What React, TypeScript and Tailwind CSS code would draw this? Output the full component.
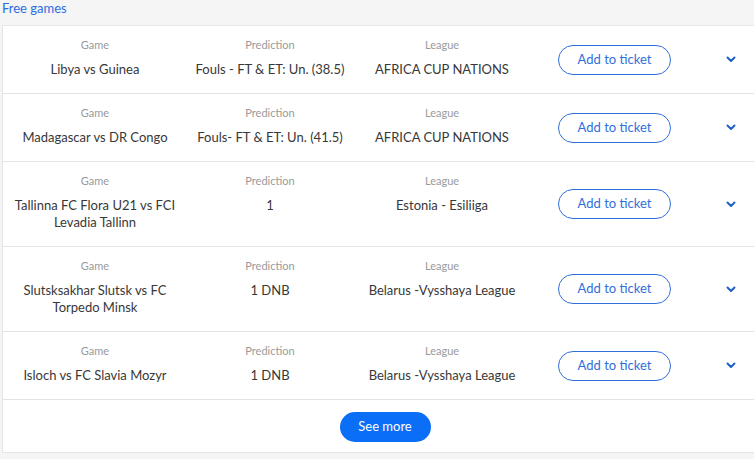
import React from "react";

type Tip = { game: string; prediction: string; league: string };

const tips: Tip[] = [
  { game: "Libya vs Guinea", prediction: "Fouls - FT & ET: Un. (38.5)", league: "AFRICA CUP NATIONS" },
  { game: "Madagascar vs DR Congo", prediction: "Fouls- FT & ET: Un. (41.5)", league: "AFRICA CUP NATIONS" },
  { game: "Tallinna FC Flora U21 vs FCI Levadia Tallinn", prediction: "1", league: "Estonia - Esiliiga" },
  { game: "Slutsksakhar Slutsk vs FC Torpedo Minsk", prediction: "1 DNB", league: "Belarus -Vysshaya League" },
  { game: "Isloch vs FC Slavia Mozyr", prediction: "1 DNB", league: "Belarus -Vysshaya League" },
];

function Cell({ label, value, width }: { label: string; value: string; width: string }) {
  return (
    <div className={`${width} flex flex-col items-center text-center`}>
      <div className="text-[11px] leading-[14px] text-[#9a9a9a]">{label}</div>
      <div className="mt-[9px] text-[13px] leading-[17px] text-[#383838]">{value}</div>
    </div>
  );
}

function Chevron() {
  return (
    <svg width="10" height="7" viewBox="0 0 10 7" fill="none">
      <path d="M1.5 1.5 L5 5 L8.5 1.5" stroke="#1e5fc8" strokeWidth="2" strokeLinecap="round" strokeLinejoin="round" />
    </svg>
  );
}

export default function App() {
  return (
    <div
      className="w-[754px] h-[459px] overflow-hidden bg-[#f5f5f5]"
      style={{ fontFamily: "Lato, 'Open Sans', sans-serif" }}
    >
      <div className="h-[25px] pl-[2px] text-[13px] leading-[17px] text-[#2a6ee0]">Free games</div>
      <div className="ml-[2px] w-[766px] bg-white border border-[#e6e6e6]">
        {tips.map((t, i) => (
          <div key={i} className="flex items-center border-b border-[#e3e3e3] pl-[5px]">
            <div className="flex items-start pt-[12px] pb-[15px]">
              <Cell width="w-[174px]" label="Game" value={t.game} />
              <Cell width="w-[176px]" label="Prediction" value={t.prediction} />
              <Cell width="w-[168px]" label="League" value={t.league} />
            </div>
            <div className="ml-[32px] w-[113px] h-[30px] rounded-full border border-[#2f6fdc] flex items-center justify-center text-[13px] text-[#2f6fdc]">
              Add to ticket
            </div>
            <div className="ml-[55px] flex items-center">
              <Chevron />
            </div>
          </div>
        ))}
        <div className="flex justify-center pt-[12px] pb-[10px]">
          <div className="w-[91px] h-[30px] rounded-full bg-[#0b6ef6] text-white text-[13px] flex items-center justify-center">
            See more
          </div>
        </div>
      </div>
    </div>
  );
}
